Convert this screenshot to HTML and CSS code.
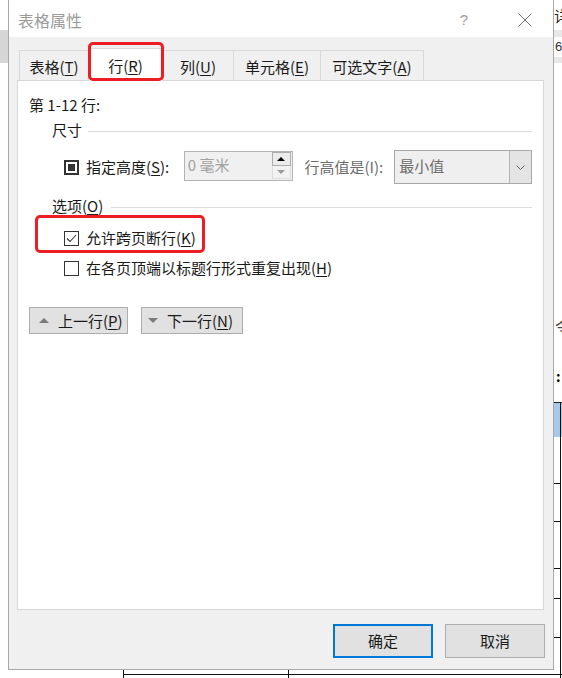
FILE: index.html
```html
<!DOCTYPE html>
<html lang="zh-CN">
<head>
<meta charset="utf-8">
<title>表格属性</title>
<link rel="stylesheet" href="styles.css">
</head>
<body>
<div class="desk">
  <div class="bg-band-left"></div>
  <div class="bg-right-char">详</div>
  <div class="bg-band-right bg-band-right--a"></div>
  <div class="bg-right-num">6</div>
  <div class="bg-band-right bg-band-right--b"></div>
  <div class="bg-right-char2">令</div>
  <div class="bg-right-colon">:</div>
  <div class="bg-cell"></div>
  <div class="bg-vline"></div>
  <div class="bg-tick bg-tick--1"></div>
  <div class="bg-tick bg-tick--2"></div>
  <div class="bg-tick bg-tick--3"></div>
  <div class="bg-tick bg-tick--4"></div>
  <div class="bg-tick bg-tick--5"></div>
  <div class="bg-hline"></div>
  <div class="bg-vtick bg-vtick--1"></div>
  <div class="bg-vtick bg-vtick--2"></div>

  <div class="dialog">
    <div class="titlebar">
      <span class="title">表格属性</span>
      <span class="help">?</span>
      <span class="close">
        <svg width="14" height="14" viewBox="0 0 14 14"><path d="M0.5 0.5 L13.5 13.5 M13.5 0.5 L0.5 13.5" stroke="#707070" stroke-width="1" fill="none"/></svg>
      </span>
    </div>
    <div class="body">
      <div class="tabs">
        <div class="tab tab--table">表格(<u>T</u>)</div>
        <div class="tab tab--row tab--active">行(<u>R</u>)</div>
        <div class="tab tab--col">列(<u>U</u>)</div>
        <div class="tab tab--cell">单元格(<u>E</u>)</div>
        <div class="tab tab--alt">可选文字(<u>A</u>)</div>
      </div>
      <div class="panel">
        <div class="range">第 1-12 行:</div>

        <div class="group-head">
          <span>尺寸</span><span class="rule"></span>
        </div>

        <div class="size-row">
          <span class="check check--mixed"><span class="check-dot"></span></span>
          <span class="size-label">指定高度(<u>S</u>):</span>
          <div class="spin">
            <span class="spin-val">0 毫米</span>
            <div class="spin-btns">
              <span class="spin-up"><span class="tri-up"></span></span>
              <span class="spin-down"><span class="tri-down"></span></span>
            </div>
          </div>
          <span class="rule-label">行高值是(I):</span>
          <div class="select">
            <span class="select-val">最小值</span>
            <span class="select-arrow">
              <svg width="9" height="5" viewBox="0 0 9 5"><path d="M0.5 0.5 L4.5 4.5 L8.5 0.5" stroke="#606060" stroke-width="1" fill="none"/></svg>
            </span>
          </div>
        </div>

        <div class="group-head group-head--opts">
          <span>选项(<u>O</u>)</span><span class="rule"></span>
        </div>

        <div class="opt-row opt-row--first">
          <span class="check">
            <svg width="13" height="13" viewBox="0 0 13 13"><path d="M2 6.5 L5 9.5 L11 3" stroke="#333" stroke-width="1.1" fill="none"/></svg>
          </span>
          <span class="opt-label">允许跨页断行(<u>K</u>)</span>
        </div>
        <div class="opt-row">
          <span class="check"></span>
          <span class="opt-label">在各页顶端以标题行形式重复出现(<u>H</u>)</span>
        </div>

        <div class="nav-row">
          <button class="nav-btn nav-btn--prev"><span class="nav-tri-up"></span>上一行(<u>P</u>)</button>
          <button class="nav-btn nav-btn--next"><span class="nav-tri-down"></span>下一行(<u>N</u>)</button>
        </div>
      </div>
      <div class="footer">
        <button class="btn btn--primary">确定</button>
        <button class="btn">取消</button>
      </div>
    </div>
  </div>

  <div class="mark mark--tab"></div>
  <div class="mark mark--opt"></div>
</div>
</body>
</html>
```

FILE: styles.css
```css
* { box-sizing: border-box; }

body {
  margin: 0;
  width: 562px;
  height: 678px;
  overflow: hidden;
  background: #ffffff;
  font-family: "Noto Sans CJK SC", "Noto Sans", sans-serif;
  font-size: 15px;
  color: #1a1a1a;
}

u { text-decoration: underline; text-underline-offset: 2px; text-decoration-thickness: 1px; }

.desk {
  position: relative;
  width: 562px;
  height: 678px;
  overflow: hidden;
}

/* ---------- background document ---------- */
.bg-band-left {
  position: absolute; left: 0; top: 30px; width: 8px; height: 33px;
  background: #d6d6d6;
}
.bg-right-char {
  position: absolute; left: 554px; top: 6px; font-size: 15px; line-height: 20px; color: #222;
}
.bg-band-right {
  position: absolute; left: 553px; width: 9px; background: #e8e8e8;
}
.bg-band-right--a { top: 30px; height: 7px; }
.bg-band-right--b { top: 57px; height: 6px; }
.bg-right-num {
  position: absolute; left: 555px; top: 37px; font-size: 13px; line-height: 20px; color: #333;
  font-family: "Liberation Sans", sans-serif;
}
.bg-right-char2 {
  position: absolute; left: 555px; top: 316px; font-size: 16px; line-height: 20px; color: #444;
}
.bg-right-colon {
  position: absolute; left: 556px; top: 366px; font-size: 14px; line-height: 20px; color: #000; font-weight: bold;
}
.bg-cell {
  position: absolute; left: 554px; top: 402px; width: 8px; height: 35px;
  background: #a9c9e8; border-top: 1px solid #222;
}
.bg-vline {
  position: absolute; left: 560px; top: 402px; width: 1px; height: 276px; background: #111;
}
.bg-tick {
  position: absolute; left: 553px; width: 8px; height: 1px; background: #111;
}
.bg-tick--1 { top: 483px; }
.bg-tick--2 { top: 521px; }
.bg-tick--3 { top: 568px; }
.bg-tick--4 { top: 598px; }
.bg-tick--5 { top: 637px; }
.bg-hline {
  position: absolute; left: 123px; top: 674px; width: 439px; height: 1px; background: #111;
}
.bg-vtick {
  position: absolute; top: 669px; width: 1px; height: 9px; background: #111;
}
.bg-vtick--1 { left: 123px; }
.bg-vtick--2 { left: 288px; }

/* ---------- dialog window ---------- */
.dialog {
  position: absolute;
  left: 8px;
  top: -1px;
  width: 546px;
  height: 671px;
  border: 1px solid #a9a9a9;
  background: #f0f0f0;
  display: flex;
  flex-direction: column;
}

.titlebar {
  height: 37px;
  flex: 0 0 37px;
  background: #ffffff;
  display: flex;
  align-items: center;
  padding-left: 9px;
}
.title {
  font-size: 16px;
  line-height: 20px;
  color: #9b9b9b;
  margin-top: 2px;
}
.help {
  margin-left: auto;
  font-family: "Liberation Sans", sans-serif;
  font-size: 15px;
  color: #9b9b9b;
  margin-top: 2px;
}
.close {
  display: flex;
  margin-left: 50px;
  margin-right: 21px;
  margin-top: 2px;
}

.body {
  flex: 1;
  padding: 13px 8px 0 8px;
  display: flex;
  flex-direction: column;
}

/* tabs */
.tabs {
  display: flex;
  align-items: flex-end;
  height: 30px;
  margin-left: 2px;
}
.tab {
  height: 30px;
  border: 1px solid #d9d9d9;
  border-bottom: none;
  margin-right: -1px;
  background: #f0f0f0;
  display: flex;
  align-items: center;
  justify-content: center;
  line-height: 20px;
  padding-top: 3px;
}
.tab--table { width: 70px; }
.tab--row { width: 75px; }
.tab--col { width: 72px; }
.tab--cell { width: 88px; }
.tab--alt { width: 104px; }
.tab--active {
  height: 33px;
  margin-bottom: -1px;
  background: #ffffff;
  position: relative;
  z-index: 1;
  padding-top: 2px;
}

/* panel */
.panel {
  width: 527px;
  height: 530px;
  border: 1px solid #d7d7d7;
  background: #ffffff;
  padding: 14px 11px 0 11px;
}

.range {
  line-height: 20px;
  height: 20px;
}

.group-head {
  display: flex;
  align-items: center;
  height: 20px;
  line-height: 20px;
  margin-top: 5px;
  margin-left: 23px;
}
.group-head .rule {
  flex: 1;
  height: 1px;
  background: #dcdcdc;
  margin-left: 6px;
  margin-top: 2px;
}
.group-head--opts { margin-top: 12px; }
.group-head--opts .rule { margin-left: 8px; }

.size-row {
  display: flex;
  align-items: center;
  height: 34px;
  margin-top: 10px;
  line-height: 20px;
}

.check {
  width: 15px;
  height: 15px;
  border: 1px solid #333333;
  background: #ffffff;
  margin-left: 35px;
  display: flex;
  align-items: center;
  justify-content: center;
  flex: 0 0 15px;
}
.check--mixed { border-width: 2px; }
.check-dot {
  width: 7px;
  height: 7px;
  background: #333333;
}

.size-label {
  margin-left: 7px;
  width: 98px;
}

.spin {
  display: flex;
  width: 109px;
  height: 30px;
  margin-top: -2px;
  border: 1px solid #b4b4b4;
  background: #f0f0f0;
}
.spin-val {
  flex: 1;
  padding-left: 3px;
  line-height: 26px;
  color: #a0a0a0;
}
.spin-btns {
  width: 20px;
  display: flex;
  flex-direction: column;
  padding: 0 1px 1px 0;
}
.spin-up, .spin-down {
  flex: 1;
  display: flex;
  align-items: center;
  justify-content: center;
}
.spin-up {
  border: 1px solid #adadad;
  background: #ececec;
}
.spin-down {
  border: 1px solid #dedede;
  border-top: none;
  background: #f2f2f2;
}
.tri-up {
  width: 0; height: 0;
  border-left: 4px solid transparent;
  border-right: 4px solid transparent;
  border-bottom: 4px solid #000000;
}
.tri-down {
  width: 0; height: 0;
  border-left: 4px solid transparent;
  border-right: 4px solid transparent;
  border-top: 4px solid #9a9a9a;
}

.rule-label {
  margin-left: 12px;
  width: 90px;
  color: #6d6d6d;
}

.select {
  display: flex;
  width: 138px;
  height: 34px;
  border: 1px solid #a8a8a8;
  background: #efefef;
}
.select-val {
  flex: 1;
  padding-left: 4px;
  line-height: 30px;
  color: #6d6d6d;
}
.select-arrow {
  width: 22px;
  border-left: 1px solid #b4b4b4;
  background: #e4e4e4;
  display: flex;
  align-items: center;
  justify-content: center;
}

.opt-row {
  display: flex;
  align-items: center;
  height: 20px;
  line-height: 20px;
  margin-top: 10px;
}
.opt-row--first { margin-top: 12px; }
.opt-label { margin-left: 7px; }

.nav-row {
  display: flex;
  gap: 13px;
  margin-top: 29px;
}
.nav-btn {
  height: 27px;
  border: 1px solid #adadad;
  background: #e1e1e1;
  font-family: inherit;
  font-size: 15px;
  color: #1a1a1a;
  display: flex;
  align-items: center;
  padding: 0 0 0 9px;
  line-height: 20px;
}
.nav-btn--prev { width: 99px; }
.nav-btn--next { width: 102px; padding-left: 6px; }
.nav-tri-up {
  width: 0; height: 0;
  border-left: 5px solid transparent;
  border-right: 5px solid transparent;
  border-bottom: 5px solid #7a7a7a;
  margin-right: 9px;
}
.nav-tri-down {
  width: 0; height: 0;
  border-left: 5px solid transparent;
  border-right: 5px solid transparent;
  border-top: 5px solid #7a7a7a;
  margin-right: 9px;
}

/* footer */
.footer {
  display: flex;
  justify-content: flex-end;
  gap: 12px;
  margin-top: 14px;
}
.btn {
  width: 100px;
  height: 34px;
  border: 1px solid #adadad;
  background: #e1e1e1;
  font-family: inherit;
  font-size: 15px;
  color: #1a1a1a;
  line-height: 20px;
  padding: 0;
}
.btn--primary {
  border: 2px solid #0078d7;
}

/* red annotation boxes */
.mark {
  position: absolute;
  border: 3px solid #ee1d23;
  border-radius: 5px;
  z-index: 5;
}
.mark--tab { left: 88px; top: 42px; width: 76px; height: 39px; }
.mark--opt { left: 35px; top: 215px; width: 170px; height: 38px; }
```
